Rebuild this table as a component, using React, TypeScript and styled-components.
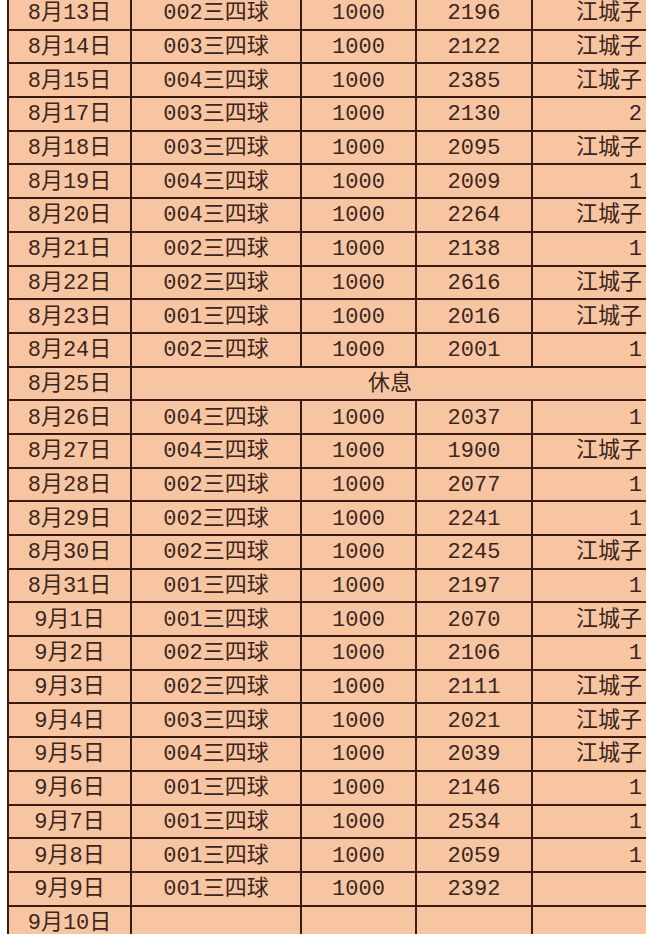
import React from "react";
import styled, { createGlobalStyle } from "styled-components";

const GlobalStyle = createGlobalStyle`
  html, body {
    margin: 0;
    padding: 0;
    background: #fff;
    overflow: hidden;
  }
`;

type Row = {
  date: string;
  code?: string;
  amount?: string;
  total?: string;
  note?: string;
  rest?: boolean;
};

const rows: Row[] = [
  { date: "8月13日", code: "002三四球", amount: "1000", total: "2196", note: "江城子" },
  { date: "8月14日", code: "003三四球", amount: "1000", total: "2122", note: "江城子" },
  { date: "8月15日", code: "004三四球", amount: "1000", total: "2385", note: "江城子" },
  { date: "8月17日", code: "003三四球", amount: "1000", total: "2130", note: "2" },
  { date: "8月18日", code: "003三四球", amount: "1000", total: "2095", note: "江城子" },
  { date: "8月19日", code: "004三四球", amount: "1000", total: "2009", note: "1" },
  { date: "8月20日", code: "004三四球", amount: "1000", total: "2264", note: "江城子" },
  { date: "8月21日", code: "002三四球", amount: "1000", total: "2138", note: "1" },
  { date: "8月22日", code: "002三四球", amount: "1000", total: "2616", note: "江城子" },
  { date: "8月23日", code: "001三四球", amount: "1000", total: "2016", note: "江城子" },
  { date: "8月24日", code: "002三四球", amount: "1000", total: "2001", note: "1" },
  { date: "8月25日", rest: true },
  { date: "8月26日", code: "004三四球", amount: "1000", total: "2037", note: "1" },
  { date: "8月27日", code: "004三四球", amount: "1000", total: "1900", note: "江城子" },
  { date: "8月28日", code: "002三四球", amount: "1000", total: "2077", note: "1" },
  { date: "8月29日", code: "002三四球", amount: "1000", total: "2241", note: "1" },
  { date: "8月30日", code: "002三四球", amount: "1000", total: "2245", note: "江城子" },
  { date: "8月31日", code: "001三四球", amount: "1000", total: "2197", note: "1" },
  { date: "9月1日", code: "001三四球", amount: "1000", total: "2070", note: "江城子" },
  { date: "9月2日", code: "002三四球", amount: "1000", total: "2106", note: "1" },
  { date: "9月3日", code: "002三四球", amount: "1000", total: "2111", note: "江城子" },
  { date: "9月4日", code: "003三四球", amount: "1000", total: "2021", note: "江城子" },
  { date: "9月5日", code: "004三四球", amount: "1000", total: "2039", note: "江城子" },
  { date: "9月6日", code: "001三四球", amount: "1000", total: "2146", note: "1" },
  { date: "9月7日", code: "001三四球", amount: "1000", total: "2534", note: "1" },
  { date: "9月8日", code: "001三四球", amount: "1000", total: "2059", note: "1" },
  { date: "9月9日", code: "001三四球", amount: "1000", total: "2392", note: "" },
  { date: "9月10日", code: "", amount: "", total: "", note: "" },
];

const columnWidths = [123, 170, 115, 116, 117];

const Sheet = styled.div`
  padding-left: 7px;
  height: 934px;
  overflow: hidden;
`;

const Table = styled.table`
  margin-top: -5px;
  width: 641px;
  table-layout: fixed;
  border-collapse: collapse;
  background: #f8c5a3;
  font-family: "Liberation Mono", "Noto Sans CJK SC", monospace;
  font-size: 22px;
  color: #3a261c;
`;

const Col = styled.col<{ $w: number }>`
  width: ${(p) => p.$w}px;
`;

const Cell = styled.td<{ $align?: "center" | "right" }>`
  height: 28.7px;
  padding: 3px ${(p) => (p.$align === "right" ? "6px" : "0")} 0 0;
  border: 2px solid #3a1c12;
  text-align: ${(p) => p.$align ?? "center"};
  vertical-align: middle;
  white-space: nowrap;
  overflow: hidden;
  line-height: 1;
`;

export default function App() {
  return (
    <>
      <GlobalStyle />
      <Sheet>
        <Table>
          <colgroup>
            {columnWidths.map((w, i) => (
              <Col key={i} $w={w} />
            ))}
          </colgroup>
          <tbody>
            {rows.map((r) => (
              <tr key={r.date}>
                <Cell>{r.date}</Cell>
                {r.rest ? (
                  <Cell colSpan={4}>休息</Cell>
                ) : (
                  <>
                    <Cell>{r.code}</Cell>
                    <Cell>{r.amount}</Cell>
                    <Cell>{r.total}</Cell>
                    <Cell $align="right">{r.note}</Cell>
                  </>
                )}
              </tr>
            ))}
          </tbody>
        </Table>
      </Sheet>
    </>
  );
}
